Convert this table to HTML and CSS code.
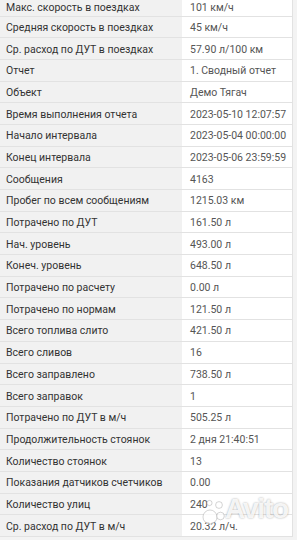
FILE: index.html
```html
<!DOCTYPE html>
<html lang="ru">
<head>
<meta charset="utf-8">
<link rel="stylesheet" href="styles.css">
</head>
<body>
<div class="wrap">
<div class="report">
<div class="row first"><div class="k">Макс. скорость в поездках</div><div class="v">101 км/ч</div></div>
<div class="row"><div class="k">Средняя скорость в поездках</div><div class="v">45 км/ч</div></div>
<div class="row"><div class="k">Ср. расход по ДУТ в поездках</div><div class="v">57.90 л/100 км</div></div>
<div class="row"><div class="k">Отчет</div><div class="v">1. Сводный отчет</div></div>
<div class="row"><div class="k">Объект</div><div class="v">Демо Тягач</div></div>
<div class="row"><div class="k">Время выполнения отчета</div><div class="v">2023-05-10 12:07:57</div></div>
<div class="row"><div class="k">Начало интервала</div><div class="v">2023-05-04 00:00:00</div></div>
<div class="row"><div class="k">Конец интервала</div><div class="v">2023-05-06 23:59:59</div></div>
<div class="row"><div class="k">Сообщения</div><div class="v">4163</div></div>
<div class="row"><div class="k">Пробег по всем сообщениям</div><div class="v">1215.03 км</div></div>
<div class="row"><div class="k">Потрачено по ДУТ</div><div class="v">161.50 л</div></div>
<div class="row"><div class="k">Нач. уровень</div><div class="v">493.00 л</div></div>
<div class="row"><div class="k">Конеч. уровень</div><div class="v">648.50 л</div></div>
<div class="row"><div class="k">Потрачено по расчету</div><div class="v">0.00 л</div></div>
<div class="row"><div class="k">Потрачено по нормам</div><div class="v">121.50 л</div></div>
<div class="row"><div class="k">Всего топлива слито</div><div class="v">421.50 л</div></div>
<div class="row"><div class="k">Всего сливов</div><div class="v">16</div></div>
<div class="row"><div class="k">Всего заправлено</div><div class="v">738.50 л</div></div>
<div class="row"><div class="k">Всего заправок</div><div class="v">1</div></div>
<div class="row"><div class="k">Потрачено по ДУТ в м/ч</div><div class="v">505.25 л</div></div>
<div class="row"><div class="k">Продолжительность стоянок</div><div class="v">2 дня 21:40:51</div></div>
<div class="row"><div class="k">Количество стоянок</div><div class="v">13</div></div>
<div class="row"><div class="k">Показания датчиков счетчиков</div><div class="v">0.00</div></div>
<div class="row"><div class="k">Количество улиц</div><div class="v">240</div></div>
<div class="row"><div class="k">Ср. расход по ДУТ в м/ч</div><div class="v">20.32 л/ч.</div></div>
</div>
<div class="watermark" aria-hidden="true">
<svg class="wm-dots" width="24" height="32" viewBox="0 0 24 32">
<circle cx="9" cy="23" r="7"/>
<circle cx="19.5" cy="22" r="3.8"/>
<circle cx="18" cy="11" r="3.4"/>
<circle cx="8.5" cy="9" r="2.6"/>
</svg>
<span class="wm-text">Avito</span>
</div>
</div>
</body>
</html>
```
FILE: styles.css
```css
html, body {
  margin: 0;
  padding: 0;
  background: #f3f3f3;
}
body {
  width: 297px;
  height: 540px;
  overflow: hidden;
  font-family: Roboto, "Noto Sans", sans-serif;
  font-size: 10.5px;
}
.wrap {
  position: relative;
}
.report {
  display: flex;
  flex-direction: column;
  width: 293px;
}
.row {
  display: grid;
  grid-template-columns: 182px 111px;
  height: 21.7px;
  box-sizing: border-box;
  border-bottom: 1px solid #e2e2e2;
}
.row.first {
  height: 16.5px;
}
.k, .v {
  display: flex;
  align-items: center;
  white-space: nowrap;
  overflow: hidden;
  padding-top: 1px;
  box-sizing: border-box;
}
.first .k, .first .v {
  padding-top: 0;
}
.k {
  background: #f1f1f1;
  color: #333;
  padding-left: 6px;
}
.v {
  background: #fff;
  color: #555;
  padding-left: 8px;
  border-right: 1px solid #e2e2e2;
}
.watermark {
  position: absolute;
  left: 201px;
  top: 494px;
  display: flex;
  align-items: center;
  gap: 0;
  opacity: 0.9;
}
.wm-dots circle {
  fill: rgba(255, 255, 255, 0.85);
  stroke: rgba(140, 140, 140, 0.5);
  stroke-width: 0.8;
}
.wm-text {
  font-family: "Liberation Sans", Arial, sans-serif;
  font-size: 28px;
  font-weight: bold;
  letter-spacing: -1.2px;
  color: rgba(255, 255, 255, 0.9);
  text-shadow: 0 0 2px rgba(0, 0, 0, 0.4);
  margin-top: -2px;
}
```
